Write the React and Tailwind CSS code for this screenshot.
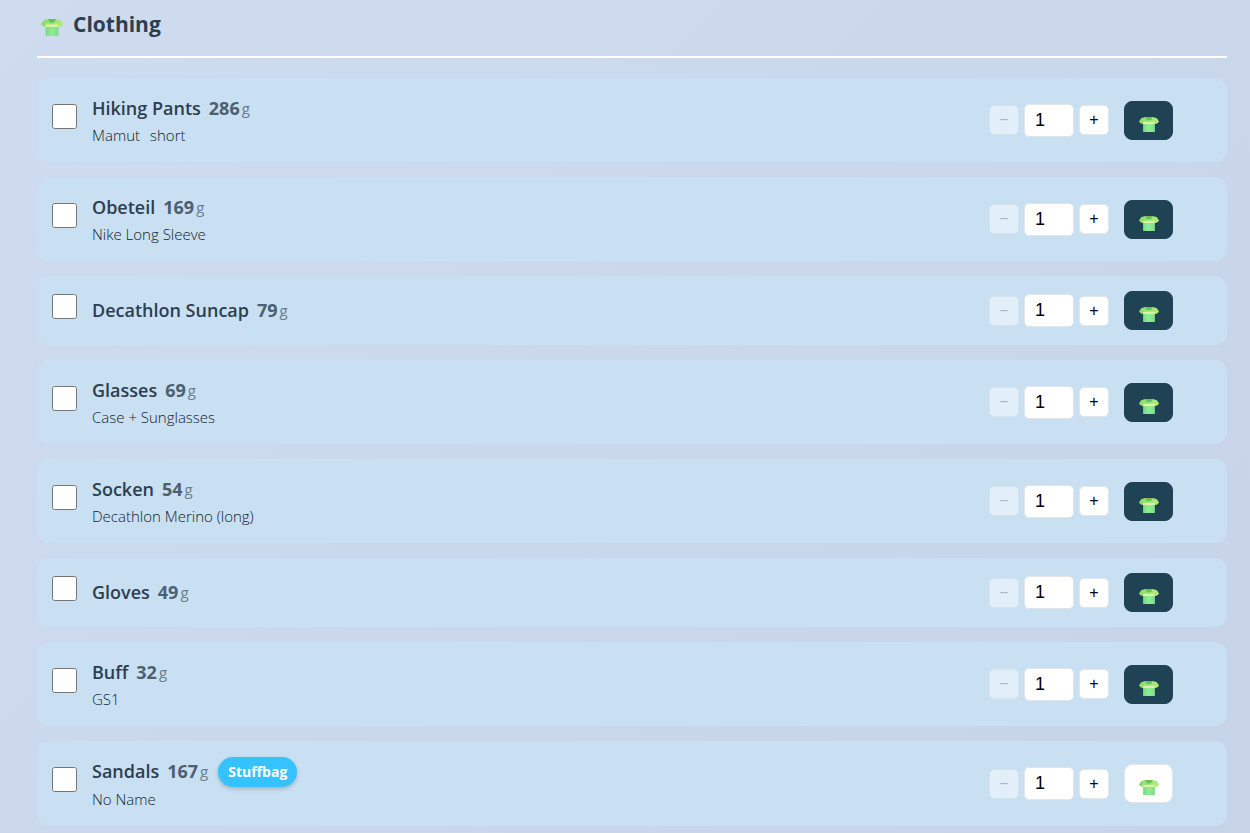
import React, { useState } from 'react';

const initialItems = [
  { id: 1, name: 'Hiking Pants', weight: 286, details: ['Mamut', 'short'], worn: true },
  { id: 2, name: 'Obeteil', weight: 169, details: ['Nike Long Sleeve'], worn: true },
  { id: 3, name: 'Decathlon Suncap', weight: 79, details: [], worn: true },
  { id: 4, name: 'Glasses', weight: 69, details: ['Case + Sunglasses'], worn: true },
  { id: 5, name: 'Socken', weight: 54, details: ['Decathlon Merino (long)'], worn: true },
  { id: 6, name: 'Gloves', weight: 49, details: [], worn: true },
  { id: 7, name: 'Buff', weight: 32, details: ['GS1'], worn: true },
  { id: 8, name: 'Sandals', weight: 167, details: ['No Name'], bag: 'Stuffbag', worn: false },
];

const ShirtIcon = ({ className }) => (
  <svg className={className} viewBox="0 0 22 17" preserveAspectRatio="none" aria-hidden="true">
    <defs>
      <linearGradient id="shirt-body" x1="0" y1="0" x2="1" y2="0">
        <stop offset="0" stopColor="#78dc80" />
        <stop offset="0.5" stopColor="#8eee92" />
        <stop offset="1" stopColor="#7cdc8c" />
      </linearGradient>
      <linearGradient id="shirt-top" x1="0" y1="0" x2="1" y2="0">
        <stop offset="0" stopColor="#8ad866" />
        <stop offset="0.5" stopColor="#a0e677" />
        <stop offset="1" stopColor="#aeea78" />
      </linearGradient>
    </defs>
    <path d="M4.500 5H17.500V16.500Q17.500 17 17 17H5Q4.500 17 4.500 16.500Z" fill="url(#shirt-body)" />
    <path d="M7 0H15L19 1Q19.600 1.200 20 2L22 5Q22 5.500 21.500 6L19 8Q18.300 8 17.500 7H4.500Q3.700 8 3 8L0.500 6Q0 5.500 0 5L2 2Q2.400 1.200 3 1Z" fill="url(#shirt-top)" />
    <path d="M4.500 5.500H17.500V8H4.500Z" fill="#dff0a5" />
    <path d="M7 0H15Q14 4 11 4Q8 4 7 0Z" fill="#52cb70" />
    <path d="M8 0H14Q13 2 11 2Q9 2 8 0Z" fill="#90b13c" />
  </svg>
);

const ItemRow = ({ item, onToggleWorn }) => {
  const [quantity, setQuantity] = useState(1);
  const [packed, setPacked] = useState(false);
  const stepButton = 'w-[30px] h-[30px] flex items-center justify-center rounded-[5px] border border-[#e2e6ea] bg-white text-base leading-none text-black disabled:opacity-50 disabled:text-[#8b949b] font-["Liberation_Sans",Arial,sans-serif]';

  return (
    <li className="flex items-center p-[15px] rounded-xl bg-[#c8e0f2]">
      <input
        id={`item-${item.id}`}
        type="checkbox"
        checked={packed}
        onChange={(e) => setPacked(e.target.checked)}
        className="w-[25px] h-[25px] mb-2 mr-[15px] shrink-0"
      />
      <div className="flex-1 min-w-0">
        <div className="flex items-center min-h-[30px]">
          <label htmlFor={`item-${item.id}`} className="text-[18px] font-semibold text-[#2c3e50]">{item.name}</label>
          <span className="ml-2 text-[18px] font-bold text-[#4d6070]">{item.weight}</span>
          <span className="ml-[2px] text-[15px] text-[#6c7d8c]">g</span>
          {item.bag && (
            <span className="ml-[10px] mt-px h-[30px] px-[10px] flex items-center rounded-full bg-[#35c2ff] text-white text-sm font-bold shadow-[0_2px_4px_rgba(0,0,0,0.2)]">
              {item.bag}
            </span>
          )}
        </div>
        {item.details.length > 0 && (
          <div className="flex gap-[10px] text-[15px] leading-6 font-light text-[#14222f]">
            {item.details.map((detail) => <span key={detail}>{detail}</span>)}
          </div>
        )}
      </div>

      <div className="flex items-center gap-[5px] mr-[15px]">
        <button type="button" aria-label="Decrease quantity" disabled={quantity <= 1} onClick={() => setQuantity(quantity - 1)} className={stepButton}>
          −
        </button>
        <input
          type="number"
          min="1"
          aria-label={`${item.name} quantity`}
          value={quantity}
          onChange={(e) => setQuantity(Number(e.target.value))}
          className='w-[50px] h-[33px] px-[10px] rounded-[5px] border border-[#e2e6ea] bg-white text-[18px] text-black font-["Liberation_Sans",Arial,sans-serif]'
        />
        <button type="button" aria-label="Increase quantity" onClick={() => setQuantity(quantity + 1)} className={stepButton}>
          +
        </button>
      </div>
      <button
        type="button"
        aria-label="Worn"
        aria-pressed={item.worn}
        onClick={() => onToggleWorn(item.id)}
        className={`w-[49px] h-[39px] pt-[8px] mr-[39px] flex items-center justify-center rounded-lg border ${item.worn ? 'bg-[#1f4355] border-[#1f4355]' : 'bg-white border-[#e2e6ea]'}`}
      >
        <ShirtIcon className="w-5 h-[15px]" />
      </button>
    </li>
  );
};

const App = () => {
  const [items, setItems] = useState(initialItems);

  const toggleWorn = (id) => {
    setItems(prev => prev.map(i => (i.id === id ? { ...i, worn: !i.worn } : i)));
  };

  return (
    <div className='min-h-screen bg-linear-135 from-[#cfdbef] to-[#c7d3e7] font-["Open_Sans","Noto_Sans",sans-serif]'>
      <section className="pl-[37px] pr-[23px] pb-2">
        <h2 className="flex items-center h-[58px] pb-1.5 pl-1 gap-[10px] mb-5 border-b-2 border-white text-[21px] font-bold text-[#2c3e50]">
          <ShirtIcon className="w-[22px] h-[17px] mt-1" />
          Clothing
        </h2>
        <ul className="flex flex-col gap-[15px]">
          {items.map(item => (
            <ItemRow key={item.id} item={item} onToggleWorn={toggleWorn} />
          ))}
        </ul>
      </section>
    </div>
  );
};

export default App;
